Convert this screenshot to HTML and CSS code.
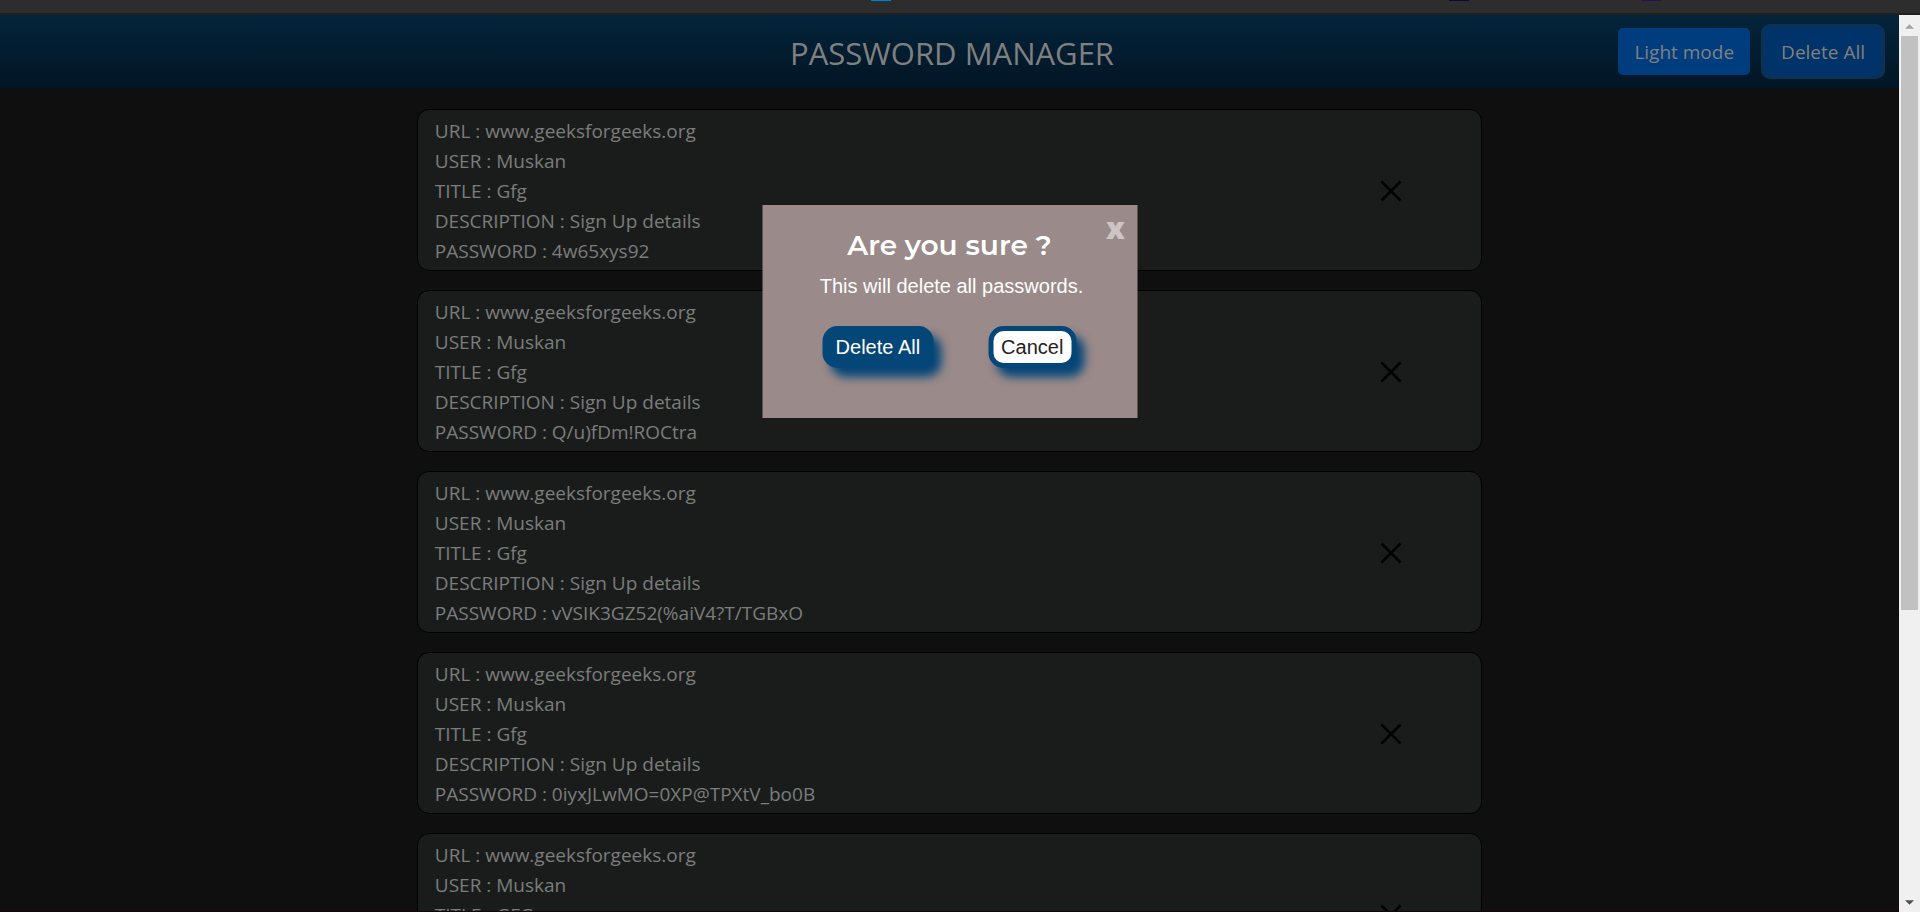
FILE: index.html
```html
<!DOCTYPE html>
<html lang="en">
<head>
<meta charset="utf-8">
<title>Password Manager</title>
<link rel="stylesheet" href="styles.css">
</head>
<body>
<div class="window-strip">
  <span class="tab-mark tab-blue"></span>
  <span class="tab-mark tab-navy"></span>
  <span class="tab-mark tab-purple"></span>
</div>
<div class="window">
  <div class="page">
    <header class="header">
      <h1 class="title">PASSWORD MANAGER</h1>
      <div class="actions">
        <button class="btn" type="button">Light mode</button>
        <button class="btn btn-focused" type="button">Delete All</button>
      </div>
    </header>
    <main class="list">
      <article class="card">
        <div class="details">
          <p>URL : www.geeksforgeeks.org</p>
          <p>USER : Muskan</p>
          <p>TITLE : Gfg</p>
          <p>DESCRIPTION : Sign Up details</p>
          <p>PASSWORD : 4w65xys92</p>
        </div>
        <button class="remove" type="button" aria-label="Delete password"><svg viewBox="0 0 22 22"><path d="M1.500 1.500 20.500 20.500M20.500 1.500 1.500 20.500"/></svg></button>
      </article>
      <article class="card">
        <div class="details">
          <p>URL : www.geeksforgeeks.org</p>
          <p>USER : Muskan</p>
          <p>TITLE : Gfg</p>
          <p>DESCRIPTION : Sign Up details</p>
          <p>PASSWORD : Q/u)fDm!ROCtra</p>
        </div>
        <button class="remove" type="button" aria-label="Delete password"><svg viewBox="0 0 22 22"><path d="M1.500 1.500 20.500 20.500M20.500 1.500 1.500 20.500"/></svg></button>
      </article>
      <article class="card">
        <div class="details">
          <p>URL : www.geeksforgeeks.org</p>
          <p>USER : Muskan</p>
          <p>TITLE : Gfg</p>
          <p>DESCRIPTION : Sign Up details</p>
          <p>PASSWORD : vVSIK3GZ52(%aiV4?T/TGBxO</p>
        </div>
        <button class="remove" type="button" aria-label="Delete password"><svg viewBox="0 0 22 22"><path d="M1.500 1.500 20.500 20.500M20.500 1.500 1.500 20.500"/></svg></button>
      </article>
      <article class="card">
        <div class="details">
          <p>URL : www.geeksforgeeks.org</p>
          <p>USER : Muskan</p>
          <p>TITLE : Gfg</p>
          <p>DESCRIPTION : Sign Up details</p>
          <p>PASSWORD : 0iyxJLwMO=0XP@TPXtV_bo0B</p>
        </div>
        <button class="remove" type="button" aria-label="Delete password"><svg viewBox="0 0 22 22"><path d="M1.500 1.500 20.500 20.500M20.500 1.500 1.500 20.500"/></svg></button>
      </article>
      <article class="card">
        <div class="details">
          <p>URL : www.geeksforgeeks.org</p>
          <p>USER : Muskan</p>
          <p>TITLE : GFG</p>
        </div>
        <button class="remove" type="button" aria-label="Delete password"><svg viewBox="0 0 22 22"><path d="M1.500 1.500 20.500 20.500M20.500 1.500 1.500 20.500"/></svg></button>
      </article>
    </main>
    <div class="dialog" role="dialog" aria-labelledby="dialog-title">
      <button class="dialog-close" type="button">x</button>
      <h2 class="dialog-title" id="dialog-title">Are you sure ?</h2>
      <p class="dialog-text">This will delete all passwords.</p>
      <div class="dialog-actions">
        <button class="pill pill-primary" type="button">Delete All</button>
        <button class="pill" type="button">Cancel</button>
      </div>
    </div>
  </div>
  <div class="scrollbar">
    <svg class="arrow arrow-up" viewBox="0 0 10 5"><path d="M5 0 10 5H0Z"/></svg>
    <div class="thumb"></div>
    <svg class="arrow arrow-down" viewBox="0 0 10 5"><path d="M0 0H10L5 5Z"/></svg>
  </div>
</div>
</body>
</html>
```
FILE: styles.css
```css
* {
  box-sizing: border-box;
}

body {
  margin: 0;
  height: 100vh;
  display: flex;
  flex-direction: column;
  overflow: hidden;
  background: #0f0f0f;
  color: #7b7c7c;
  font: 19px/30px "Open Sans", "Noto Sans", sans-serif;
}

h1, h2, p {
  margin: 0;
}

button {
  margin: 0;
  font: inherit;
  cursor: pointer;
}

.window-strip {
  position: relative;
  flex: none;
  height: 15px;
  background: #2d2d2d;
  border-bottom: 2px solid #202020;
}

.tab-mark {
  position: absolute;
  top: 0;
  width: 20px;
  height: 1px;
}

.tab-blue {
  left: 871px;
  background: #0082cc;
}

.tab-navy {
  left: 1449px;
  background: #0b0a2c;
}

.tab-purple {
  left: 1641px;
  background: #300a52;
}

.window {
  flex: 1;
  min-height: 0;
  display: flex;
}

.page {
  position: relative;
  flex: 1;
  overflow: hidden;
  border-bottom: 1px solid #16040f;
}

.header {
  display: grid;
  grid-template-columns: 1fr auto 1fr;
  align-items: center;
  padding: 13px 18px 13px 23px;
  background: linear-gradient(#04243b, #021524);
}

.title {
  grid-column: 2;
  padding-top: 2px;
  color: #808080;
  font-size: 31px;
  font-weight: 400;
  line-height: 44px;
}

.actions {
  display: flex;
  justify-content: flex-end;
  gap: 15px;
}

.btn {
  height: 47px;
  padding: 0 16px;
  border: 0;
  border-radius: 5px;
  background: #003d7f;
  color: #808080;
}

.btn-focused {
  background: #003369;
  box-shadow: 0 0 0 4px #0a3158;
}

.list {
  width: 56.1%;
  margin: 0 auto;
  padding-top: 21px;
  display: grid;
  gap: 19px;
}

.card {
  display: flex;
  justify-content: space-between;
  align-items: center;
  min-height: 162px;
  padding: 6px 79px 4px 17px;
  border: 1px solid #000;
  border-radius: 12px;
  background: #1a1c1b;
}

.details {
  align-self: flex-start;
}

.remove {
  display: flex;
  padding: 0;
  border: 0;
  background: none;
}

.remove svg {
  width: 22px;
  height: 22px;
  fill: none;
  stroke: #000;
  stroke-width: 2.5;
}

.dialog {
  position: absolute;
  top: 190px;
  left: 50%;
  width: 375px;
  height: 213px;
  padding-top: 20px;
  transform: translateX(-50%);
  background: #9a8a89;
  color: #fff;
  font-family: "Liberation Sans", Arial, sans-serif;
  font-size: 20px;
  text-align: center;
}

.dialog-title {
  font-family: Montserrat, Inter, sans-serif;
  font-size: 28px;
  font-weight: 600;
  line-height: 40px;
}

.dialog-text {
  padding: 1px 0 0 4px;
  line-height: 40px;
}

.dialog-close {
  position: absolute;
  top: 8px;
  right: 12px;
  padding: 0;
  border: 0;
  background: none;
  color: #cdc5c4;
  font: 800 30px/30px "Open Sans", sans-serif;
}

.dialog-actions {
  display: flex;
  justify-content: center;
  gap: 55px;
  padding-top: 20px;
}

.pill {
  padding: 1px 8px;
  border: 5px solid #054678;
  border-radius: 15px;
  background: #fff;
  box-shadow: 8px 9px 10px #054678;
  color: #222;
  line-height: 30px;
}

.pill-primary {
  background: #054678;
  color: #fff;
}

.scrollbar {
  flex: none;
  width: 21px;
  display: flex;
  flex-direction: column;
  align-items: center;
  background: #f0f0f0;
}

.arrow {
  width: 9px;
  height: 5px;
}

.arrow-up {
  margin: 9px 0 7px;
  fill: #a3a3a3;
}

.arrow-down {
  margin: auto 0 7px;
  fill: #505050;
}

.thumb {
  width: 17px;
  height: 64%;
  background: #c1c1c1;
}
```
